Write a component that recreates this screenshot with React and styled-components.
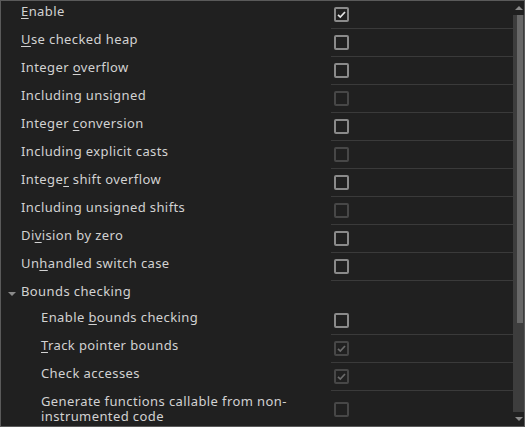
import styled, { createGlobalStyle } from 'styled-components'

const vars = {
    bg: '#202020',
    frame: '#5a5a5a',
    line: '#3a3a3a',
    text: '#d2d2d2',
    box: '#8a8a8a',
    boxOff: '#474747',
    tick: '#e6e6e6',
    tickOff: '#6a6a6a',
    track: '#3d3d3d',
    thumb: '#686868',
    arrow: '#8a8a8a',
}

const GlobalStyle = createGlobalStyle`
    html, body {
        margin: 0;
        padding: 0;
        background: ${vars.bg};
    }
`

const Panel = styled.div`
    width: 525px;
    height: 427px;
    box-sizing: border-box;
    border: 1px solid ${vars.frame};
    background: ${vars.bg};
    display: flex;
    overflow: hidden;
    font-family: 'Noto Sans', 'Open Sans', Arial, sans-serif;
    font-size: 13px;
    letter-spacing: 0.4px;
    color: ${vars.text};
`

const List = styled.div`
    flex: 1;
    min-width: 0;
    overflow: hidden;
`

const Row = styled.div`
    display: grid;
    grid-template-columns: 330px 1fr;
    min-height: 28px;
`

const Label = styled.div`
    padding: 3px 8px 4px ${(p) => (p.$indent ? 40 : 20)}px;
    line-height: 15px;
`

const Value = styled.div`
    display: flex;
    align-items: center;
    padding-left: 3px;
    border-bottom: 1px solid ${vars.line};
`

const Box = styled.span`
    width: 15px;
    height: 15px;
    box-sizing: border-box;
    border: 2px solid ${(p) => (p.$disabled ? vars.boxOff : vars.box)};
    border-radius: 2px;
    display: flex;
    align-items: center;
    justify-content: center;
    color: ${(p) => (p.$disabled ? vars.tickOff : vars.tick)};
`

const Group = styled.div`
    display: flex;
    align-items: flex-start;
    height: 26px;
    box-sizing: border-box;
    padding: 3px 0 0 7px;
    line-height: 15px;
    gap: 5px;
`

const Caret = styled.span`
    width: 0;
    height: 0;
    margin-top: 8px;
    border-left: 4px solid transparent;
    border-right: 4px solid transparent;
    border-top: 4px solid ${vars.arrow};
`

const Key = styled.u`
    text-decoration: underline;
    text-underline-offset: 2px;
    text-decoration-thickness: 1px;
`

const Scrollbar = styled.div`
    width: 11px;
    display: flex;
    flex-direction: column;
`

const Step = styled.div`
    height: 14px;
    display: flex;
    align-items: center;
    justify-content: center;
    padding-left: 1px;
`

const Arrow = styled.span`
    width: 0;
    height: 0;
    border-left: 4px solid transparent;
    border-right: 4px solid transparent;
    ${(p) =>
        p.$up
            ? `border-bottom: 4px solid ${vars.arrow};`
            : `border-top: 4px solid ${vars.arrow};`}
`

const Track = styled.div`
    flex: 1;
    background: ${vars.track};
    padding-left: 4px;
`

const Thumb = styled.div`
    width: 6px;
    height: 308px;
    background: ${vars.thumb};
`

const Check = ({ checked, disabled }) => (
    <Box $disabled={disabled}>
        {checked && (
            <svg width="11" height="11" viewBox="0 0 11 11">
                <path
                    d="M2 5.8 L4.3 8 L9 3"
                    fill="none"
                    stroke="currentColor"
                    strokeWidth="1.7"
                />
            </svg>
        )}
    </Box>
)

const top = [
    { label: <><Key>E</Key>nable</>, checked: true },
    { label: <><Key>U</Key>se checked heap</> },
    { label: <>Integer <Key>o</Key>verflow</> },
    { label: 'Including unsigned', disabled: true },
    { label: <>Integer <Key>c</Key>onversion</> },
    { label: 'Including explicit casts', disabled: true },
    { label: <>Intege<Key>r</Key> shift overflow</> },
    { label: 'Including unsigned shifts', disabled: true },
    { label: <>Di<Key>v</Key>ision by zero</> },
    { label: <>Un<Key>h</Key>andled switch case</> },
]

const bounds = [
    { label: <>Enable <Key>b</Key>ounds checking</> },
    { label: <><Key>T</Key>rack pointer bounds</>, checked: true, disabled: true },
    { label: 'Check accesses', checked: true, disabled: true },
    {
        label: 'Generate functions callable from non-instrumented code',
        disabled: true,
    },
]

export default function App() {
    return (
        <>
            <GlobalStyle />
            <Panel>
                <List>
                    {top.map((r, i) => (
                        <Row key={i}>
                            <Label>{r.label}</Label>
                            <Value>
                                <Check checked={r.checked} disabled={r.disabled} />
                            </Value>
                        </Row>
                    ))}
                    <Group>
                        <Caret />
                        Bounds checking
                    </Group>
                    {bounds.map((r, i) => (
                        <Row key={i}>
                            <Label $indent>{r.label}</Label>
                            <Value>
                                <Check checked={r.checked} disabled={r.disabled} />
                            </Value>
                        </Row>
                    ))}
                </List>
                <Scrollbar>
                    <Step>
                        <Arrow $up />
                    </Step>
                    <Track>
                        <Thumb />
                    </Track>
                    <Step>
                        <Arrow />
                    </Step>
                </Scrollbar>
            </Panel>
        </>
    )
}
